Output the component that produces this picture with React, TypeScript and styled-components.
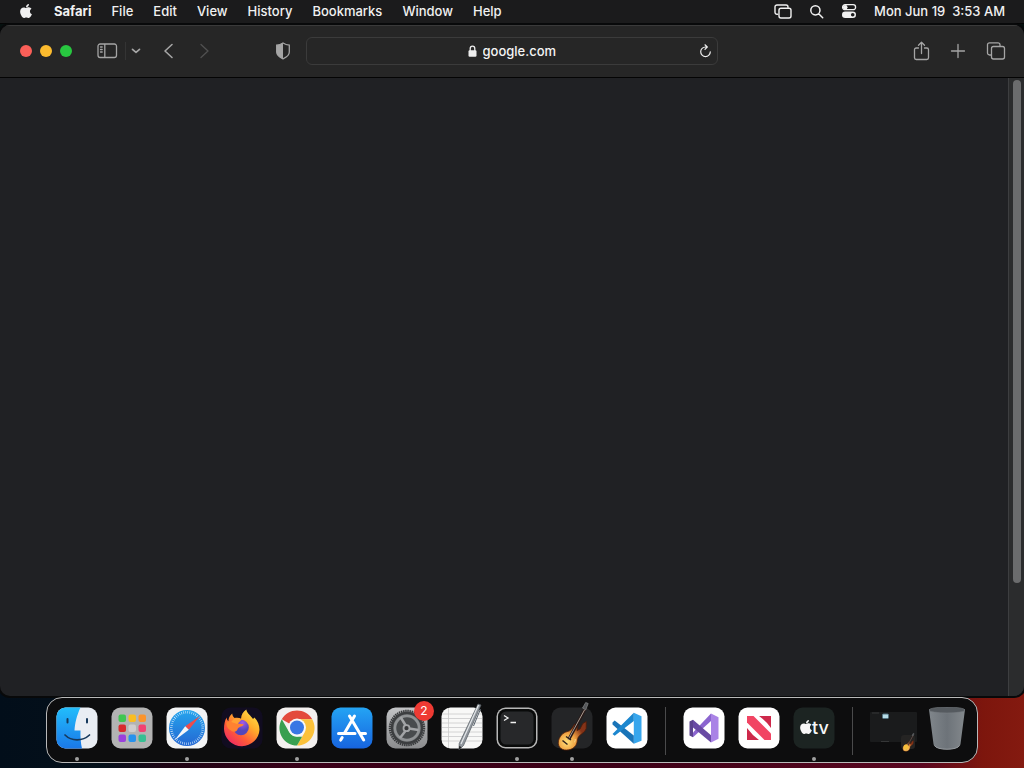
import React from "react";
import styled, { createGlobalStyle } from "styled-components";
import { FaApple } from "react-icons/fa";

const GlobalStyle = createGlobalStyle`
  * { box-sizing: border-box; }
  body {
    margin: 0;
    font-family: Inter, "Liberation Sans", sans-serif;
    background: #03101b;
  }
  button { border: 0; padding: 0; background: none; color: inherit; font: inherit; }
  svg { display: block; }
`;

const Desktop = styled.div`
  display: flex;
  flex-direction: column;
  min-height: 100vh;
  padding-bottom: 5px;
  background:
    linear-gradient(180deg, #06100f 60px, transparent 120px),
    linear-gradient(90deg, #020e1a 0%, #04101a 10%, #1c0414 16%, #3a0018 30%, #3c0016 60%, #5a0720 90%, #7d160d 96%, #841a10 100%);
`;

const MenuBar = styled.header`
  display: flex;
  align-items: center;
  justify-content: space-between;
  height: 24px;
  padding: 0 19px 1px 18px;
  background: #1b1b1c;
  border-bottom: 1px solid #050505;
  color: #f1f1f1;
  font-size: 13px;
  font-weight: 500;
  line-height: 16px;
  white-space: nowrap;
`;

const Menus = styled.nav`
  display: flex;
  align-items: center;
  gap: 20px;
`;

const MenuItem = styled.button<{ $bold?: boolean }>`
  font-weight: ${(p) => (p.$bold ? 700 : 500)};
`;

const Status = styled.div`
  display: flex;
  align-items: center;
  gap: 17px;
`;

const Clock = styled.time`
  white-space: pre;
`;

const Window = styled.main`
  display: flex;
  flex: 1;
  flex-direction: column;
  overflow: hidden;
  margin: 1px 0;
  border-radius: 10px;
  background: #202124;
  box-shadow: 0 0 0 2px #08090a;
`;

const Toolbar = styled.div`
  display: grid;
  grid-template-columns: 1fr minmax(0, 412px) 1fr;
  align-items: center;
  height: 53px;
  padding-bottom: 2px;
  background: #262626;
  border-top: 1px solid #3a3a3a;
  border-bottom: 1px solid #040404;
  color: #a5a5a5;
`;

const ToolbarSide = styled.div<{ $end?: boolean }>`
  display: flex;
  align-items: center;
  justify-content: ${(p) => (p.$end ? "flex-end" : "flex-start")};
  gap: ${(p) => (p.$end ? 20 : 0)}px;
  padding: ${(p) => (p.$end ? "0 18px 0 0" : "0 15px 0 20px")};
`;

const Lights = styled.div`
  display: flex;
  gap: 8px;
  margin-right: 25px;
`;

const Light = styled.button<{ $color: string }>`
  width: 12px;
  height: 12px;
  border-radius: 50%;
  background: ${(p) => p.$color};
`;

const Divider = styled.span`
  width: 1px;
  height: 18px;
  margin: 0 5px 0 7px;
  background: #343434;
`;

const History = styled.div`
  display: flex;
  gap: 25px;
  margin: 0 auto 0 22px;
`;

const ToolButton = styled.button<{ $dim?: boolean }>`
  color: ${(p) => (p.$dim ? "#505050" : "inherit")};
`;

const AddressBar = styled.form`
  display: grid;
  grid-template-columns: 1fr auto 1fr;
  align-items: center;
  height: 28px;
  padding: 0 5px;
  border: 1px solid #3b3b3b;
  border-radius: 6px;
  color: #eeeeee;
`;

const Site = styled.label`
  display: flex;
  grid-column: 2;
  align-items: center;
  gap: 6px;
`;

const Address = styled.input`
  width: 74px;
  padding: 0;
  border: 0;
  outline: 0;
  background: none;
  color: #f4f4f4;
  font: 500 13px/16px Inter, "Liberation Sans", sans-serif;
`;

const Reload = styled.button`
  justify-self: end;
`;

const Page = styled.div`
  display: flex;
  flex: 1;
  justify-content: flex-end;
`;

const ScrollTrack = styled.div`
  display: flex;
  justify-content: flex-end;
  width: 16px;
  padding: 2px 3px;
  border-left: 1px solid #3d3e40;
  background: #2b2c2d;
`;

const ScrollThumb = styled.div`
  width: 8px;
  height: 82%;
  border-radius: 4px;
  background: #6b6c6d;
`;

const DockBar = styled.footer`
  display: flex;
  align-self: center;
  width: calc(100% - 92px);
  max-width: 932px;
  height: 66px;
  padding: 9px 11px 0 9px;
  border: 1px solid #b9b9b9;
  border-radius: 16px;
  background: #0d0d0e;
`;

const DockGroup = styled.div<{ $grow?: boolean; $gap?: number }>`
  display: flex;
  flex: ${(p) => (p.$grow ? "1" : "none")};
  justify-content: space-between;
  gap: ${(p) => p.$gap ?? 0}px;
`;

const DockItem = styled.button`
  position: relative;
  display: flex;
  flex-direction: column;
  align-items: center;
  gap: 8px;
  height: 54px;
`;

const Running = styled.span`
  width: 4px;
  height: 4px;
  border-radius: 50%;
  background: #a0a0a0;
`;

const DockDivider = styled.span`
  width: 1px;
  height: 48px;
  margin: 0 17px;
  background: #4a4a4b;
`;

const Badge = styled.span`
  position: absolute;
  top: -6px;
  right: -6px;
  width: 20px;
  height: 20px;
  border-radius: 50%;
  background: #ee3a33;
  color: #ffffff;
  font-size: 12px;
  line-height: 20px;
  text-align: center;
`;

const Tile = ({ fill, children }: { fill: string; children?: React.ReactNode }) => (
  <svg width="42" height="42" viewBox="0 0 42 42" overflow="visible">
    <rect x=".5" y=".5" width="41" height="41" rx="9" fill={fill} />
    {children}
  </svg>
);

const Finder = () => (
  <Tile fill="#e9edf3">
    <defs>
      <linearGradient id="finder" x2="0" y2="1">
        <stop stopColor="#22bdfb" />
        <stop offset="1" stopColor="#1a78e8" />
      </linearGradient>
    </defs>
    <path d="M9.500 .5H24.500C20.500 9 19 16 18.500 23.500H24.500C24.300 30 24.700 36 26 41.500H9.500a9 9 0 0 1-9-9V9.500a9 9 0 0 1 9-9Z" fill="url(#finder)" />
    <path d="M11.500 12v3.500M31 12v3.500" stroke="#16395c" strokeWidth="2" strokeLinecap="round" />
    <path d="M9 28c6.500 6.500 17.500 6.500 24.500 0" fill="none" stroke="#16395c" strokeWidth="1.700" strokeLinecap="round" />
  </Tile>
);

const launchColors = ["#3fc651", "#f9bd23", "#fb942c", "#d82a2e", "#cfcdce", "#f24272", "#9a40dc", "#2892ed", "#36bf93"];
const Launchpad = () => (
  <Tile fill="#b3b3b3">
    {launchColors.map((c, i) => (
      <rect key={c} x={7.500 + (i % 3) * 10} y={7.500 + Math.floor(i / 3) * 10} width="7.500" height="7.500" rx="2" fill={c} />
    ))}
  </Tile>
);

const Safari = () => (
  <Tile fill="#f3f4f5">
    <defs>
      <linearGradient id="safari" x2="0" y2="1">
        <stop stopColor="#25a5ed" />
        <stop offset="1" stopColor="#2467d3" />
      </linearGradient>
    </defs>
    <circle cx="21" cy="21" r="18" fill="url(#safari)" />
    <circle cx="21" cy="21" r="15.700" fill="none" stroke="#d9edfb" strokeWidth="2.500" strokeDasharray=".6 1.455" />
    <path d="M34 9 22.800 22.800 19.200 19.200Z" fill="#ee4b4b" />
    <path d="M8.500 33.500 19.200 19.200l3.600 3.600Z" fill="#f5f6f8" />
  </Tile>
);

const Firefox = () => (
  <Tile fill="#110c20">
    <defs>
      <linearGradient id="fox" x1="1" x2=".2" y2="1">
        <stop stopColor="#fff052" />
        <stop offset=".4" stopColor="#ffad2b" />
        <stop offset=".7" stopColor="#ff5b37" />
        <stop offset="1" stopColor="#ee2667" />
      </linearGradient>
      <radialGradient id="globe" cx=".6" cy=".2">
        <stop stopColor="#a55be9" />
        <stop offset="1" stopColor="#5346bb" />
      </radialGradient>
    </defs>
    <path d="M5.500 10.500c.3 1.800 1 2.900 1.900 3.800.1-3 1.200-5.800 3.800-7.800.2 2.300 1.200 3.800 2.400 4.600 2.600-.6 4.800-.2 6.400.6.300-4.100 2.200-7.300 5.300-9.200.8 4.300 4.600 6 6.700 9.500l1.500-1.500c3.300 3.500 5 7.700 5 12.200A18 17.500 0 0 1 21 39.200 18 17.500 0 0 1 3 22c0-4.300.8-8.300 2.500-11.500Z" fill="url(#fox)" />
    <circle cx="20" cy="20.500" r="7.800" fill="url(#globe)" />
    <path d="M5.500 15.500c4-2.300 9-2 12.300 1.200l5 .6c-.6 2.100-3.300 2.300-4.900 3.200-2 1.100-.8 4-4.600 4.200-2.400.1-3-1-3.700-1.500C7 22 5 19 5.500 15.500Z" fill="#ff8131" />
    <path d="M12.500 12.200c3-1.300 6.200-1 8.400.4l-4.700 4.500-6-2Z" fill="#ffa033" />
  </Tile>
);

const Chrome = () => (
  <Tile fill="#f3f0ef">
    <path d="M21 21 5.800 12.200A17.600 17.600 0 0 1 36.200 12.200H21Z" fill="#e34a3c" />
    <path d="M21 12.200H36.200A17.600 17.600 0 0 1 21 38.600l7.600-13.200Z" fill="#fbc13a" />
    <path d="M5.800 12.200 13.400 25.400C15 28.200 18 29.800 21 29.800h5.100L21 38.600A17.600 17.600 0 0 1 5.800 12.200Z" fill="#389f50" />
    <circle cx="21" cy="20.500" r="9" fill="#f7f7f7" />
    <circle cx="21" cy="20.500" r="7" fill="#3977e4" />
  </Tile>
);

const AppStore = () => (
  <Tile fill="url(#store)">
    <defs>
      <linearGradient id="store" x2="0" y2="1">
        <stop stopColor="#24a4f4" />
        <stop offset="1" stopColor="#1764df" />
      </linearGradient>
    </defs>
    <g stroke="#fff" strokeWidth="3" strokeLinecap="round">
      <path d="m23.500 9-10.200 17.500M18.500 9l14.200 24M7.500 26.500h16.500M30 26.500h4.500M11.200 30.500l-1.500 2.600" />
    </g>
  </Tile>
);

const Settings = () => (
  <Tile fill="url(#settings)">
    <defs>
      <linearGradient id="settings" x2="0" y2="1">
        <stop stopColor="#c2c3c5" />
        <stop offset="1" stopColor="#8b8c8e" />
      </linearGradient>
    </defs>
    <g fill="none">
      <circle cx="21" cy="21" r="17" stroke="#393b3d" strokeWidth="2.500" strokeDasharray="1.500 .66" />
      <circle cx="21" cy="21" r="15" fill="#777a7c" stroke="#3c3e40" strokeWidth="2.500" />
      <circle cx="21" cy="21" r="12" fill="#484b4d" stroke="#8f9294" strokeWidth="2.500" />
      <path d="M23 21.500l9.500 1.500M20 19l-5.500-9M19.800 23.500l-5.800 7.500" stroke="#a2a4a6" strokeWidth="2.500" />
      <circle cx="20.500" cy="21.200" r="3" fill="#38393b" stroke="#a4a6a8" strokeWidth="1.800" />
    </g>
  </Tile>
);

const TextEdit = () => (
  <Tile fill="#f8f8f7">
    <path d="M1 7h40M1 11.500h40M1 16h40M1 20.500h40M1 25h40M1 29.500h40M1 34h40" stroke="#c9c9ca" strokeWidth=".8" />
    <path d="M7.500 1v40" stroke="#cacaca" strokeWidth=".8" />
    <path d="m37-3 3 1L22.500 38.500 18 43l.2-6.500Z" fill="#90969d" stroke="#555b61" strokeWidth=".7" />
    <path d="M37.500-2 20 37" stroke="#e4e7e9" strokeWidth="1.200" />
    <path d="m18 43 .2-4 2.200.9Z" fill="#222" />
    <path d="m39.500 2-7 17" stroke="#59636e" />
  </Tile>
);

const Terminal = () => (
  <Tile fill="#b7b7b7">
    <rect x="2" y="2" width="38" height="38" rx="7.500" fill="#090a0a" />
    <rect x="4.500" y="4.500" width="33" height="33" rx="5.500" fill="#27282a" />
    <path d="m8 8.500 4 2.500-4 2.500M14.500 15.500H20" fill="none" stroke="#f2f2f2" strokeWidth="1.300" />
  </Tile>
);

const Guitar = () => (
  <g>
    <path d="M20.500 22c-1.800 3-5.500 2-8.500 4.500C7.500 30.500 6 36 8.500 40c2.500 4 11 4.300 15.200-.2 3.600-3.800 1.800-7.800 4.300-10.600 2-2.200 6-3.800 7.200-7.700l.1-7-3.500 2-2.800 5.500-3 1.500 1.200-5.500-3.500-1Z" fill="url(#sunburst)" stroke="#4d1c09" strokeWidth=".8" />
    <path d="M18 32 34.500 1.500" stroke="#291a18" strokeWidth="3" />
    <path d="M17 33 33.500 3" stroke="#a89b90" strokeWidth="1" />
    <path d="m31.500 1 3.200-5.500 2.500 1-2.500 6.500Z" fill="#55575a" stroke="#919394" strokeWidth=".6" />
    <path d="m11.500 33.500 5 4M15 29.500l5 3.500" stroke="#31221b" strokeWidth="1.500" />
    <path d="M23 35.500c1-.6 1.300-2 1.200-3.500" fill="none" stroke="#f4d88b" />
  </g>
);

const GarageBand = () => (
  <Tile fill="#242527">
    <defs>
      <radialGradient id="sunburst" cx=".3" cy=".72" r=".65">
        <stop stopColor="#ffe07a" />
        <stop offset=".5" stopColor="#f0a040" />
        <stop offset="1" stopColor="#843318" />
      </radialGradient>
    </defs>
    <Guitar />
  </Tile>
);

const VsCode = () => (
  <Tile fill="#ffffff">
    <path d="m27.800 5.700 7.700 3.500v24.500l-7.700 3.100Z" fill="#37a6ed" />
    <path d="m6.500 15.500 2.200-1.900 19.100 14.800v8.400L6.500 17.500Z" fill="#1974b8" />
    <path d="m6.500 27 21.300-21.300V14L8.700 28.800l-2.200-1.900Z" fill="#1c87cf" />
  </Tile>
);

const VisualStudio = () => (
  <Tile fill="#ffffff">
    <path d="m6.500 14.500 3.500-1.700v17.500l-3.500-1.800Z" fill="#5c438f" />
    <path d="M10 25.500 28 6.500V14L10 30.300Z" fill="#8b65cf" />
    <path d="M10 12.800 28 28.200v7.300l-18-15Z" fill="#694aa4" />
    <path d="m28 6.500 7.500 3.800v21.500L28 35.500Z" fill="#aa83e6" />
  </Tile>
);

const News = () => (
  <Tile fill="#ffffff">
    <path d="M9 9h6.500L33 26.500V33h-6.500L9 15.500Z" fill="#f14463" />
    <path d="M21 9H33v12Q28 14 21 9ZM9 21V33h12Q14 28 9 21Z" fill="#ce294b" />
  </Tile>
);

const TvText = styled.text`
  font: 500 18px Inter, "Liberation Sans", sans-serif;
`;

const AppleTv = () => (
  <Tile fill="#1c2422">
    <FaApple x="5" y="12" width="14" height="16" color="#f7f7f7" />
    <TvText x="19" y="27" fill="#f7f7f7">tv</TvText>
  </Tile>
);

const Minimized = () => (
  <svg width="47" height="42" viewBox="0 0 47 42" overflow="visible">
    <rect y="5" width="47" height="30" rx="1" fill="#1a1b1c" />
    <path d="M2 6h7M11 34.500h8" stroke="#353637" />
    <rect x="12.500" y="7" width="6" height="4.500" rx="1" fill="#b7dce7" stroke="#527281" />
    <rect x="31" y="28" width="14" height="14" rx="3" fill="#252423" />
    <g transform="translate(30 28) scale(.38)"><Guitar /></g>
    <circle cx="36" cy="40" r="2.500" fill="#f6bf3c" />
  </svg>
);

const Trash = () => (
  <svg width="38" height="46" viewBox="0 0 38 46">
    <defs>
      <linearGradient id="trash">
        <stop stopColor="#80868b" />
        <stop offset=".5" stopColor="#6d7379" />
        <stop offset="1" stopColor="#83888c" />
      </linearGradient>
    </defs>
    <path d="M1 2.500 5.500 37c.6 7 26.400 7 27 0L37 2.500Z" fill="url(#trash)" />
    <ellipse cx="19" cy="3" rx="18" ry="3" fill="#555a5f" stroke="#777c81" strokeWidth=".6" />
    <path d="M6.500 38.500c2 5 23 5 25 0" fill="none" stroke="#989da1" />
  </svg>
);

const apps = [
  { name: "Finder", Icon: Finder, running: true },
  { name: "Launchpad", Icon: Launchpad },
  { name: "Safari", Icon: Safari, running: true },
  { name: "Firefox", Icon: Firefox },
  { name: "Chrome", Icon: Chrome, running: true },
  { name: "App Store", Icon: AppStore },
  { name: "System Settings", Icon: Settings, badge: 2 },
  { name: "TextEdit", Icon: TextEdit },
  { name: "Terminal", Icon: Terminal, running: true },
  { name: "GarageBand", Icon: GarageBand, running: true },
  { name: "Visual Studio Code", Icon: VsCode },
];

const recentApps = [
  { name: "Visual Studio", Icon: VisualStudio },
  { name: "News", Icon: News },
  { name: "Apple TV", Icon: AppleTv, running: true },
];

type DockApp = { name: string; Icon: React.ComponentType; running?: boolean; badge?: number };

const AppButton = ({ name, Icon, running, badge }: DockApp) => (
  <DockItem aria-label={name}>
    <Icon />
    {running && <Running />}
    {badge && <Badge>{badge}</Badge>}
  </DockItem>
);

const Line = ({ w, h, d, stroke = 1.3 }: { w: number; h: number; d: string; stroke?: number }) => (
  <svg width={w} height={h} viewBox={`0 0 ${w} ${h}`} fill="none" stroke="currentColor" strokeWidth={stroke} strokeLinecap="round" strokeLinejoin="round">
    <path d={d} />
  </svg>
);

export default function App() {
  return (
    <Desktop>
      <GlobalStyle />
      <MenuBar>
        <Menus>
          <MenuItem aria-label="Apple menu"><FaApple size={16} /></MenuItem>
          <MenuItem $bold>Safari</MenuItem>
          {["File", "Edit", "View", "History", "Bookmarks", "Window", "Help"].map((m) => (
            <MenuItem key={m}>{m}</MenuItem>
          ))}
        </Menus>
        <Status>
          <MenuItem aria-label="Stage Manager">
            <Line w={18} h={15} stroke={1.4} d="M3.500 10.300H3A2 2 0 0 1 1 8.300V3A2 2 0 0 1 3 1H12A2 2 0 0 1 14 3M7 4.300H15A2 2 0 0 1 17 6.300V12A2 2 0 0 1 15 14H7A2 2 0 0 1 5 12V6.300A2 2 0 0 1 7 4.300Z" />
          </MenuItem>
          <MenuItem aria-label="Search">
            <Line w={15} h={15} stroke={1.500} d="M11 6.300A4.600 4.600 0 1 1 1.800 6.300A4.600 4.600 0 0 1 11 6.300ZM9.700 9.700l4 4" />
          </MenuItem>
          <MenuItem aria-label="Control Center">
            <svg width="16" height="14" viewBox="0 0 16 14">
              <rect x="1.600" y=".7" width="13" height="5" rx="2.500" fill="none" stroke="currentColor" strokeWidth="1.300" />
              <circle cx="4.200" cy="3.200" r="2.300" fill="currentColor" />
              <rect x="1" y="7.500" width="14" height="6.500" rx="3.200" fill="currentColor" />
              <circle cx="11.700" cy="10.700" r="1.800" fill="#1b1b1c" />
            </svg>
          </MenuItem>
          <Clock>{"Mon Jun 19  3:53 AM"}</Clock>
        </Status>
      </MenuBar>

      <Window>
        <Toolbar>
          <ToolbarSide>
            <Lights>
              <Light $color="#fb5f58" aria-label="Close" />
              <Light $color="#fcbb2e" aria-label="Minimize" />
              <Light $color="#28c740" aria-label="Zoom" />
            </Lights>
            <ToolButton aria-label="Show sidebar">
              <Line w={21} h={16} d="M3.200 1H17.300A2.200 2.200 0 0 1 19.500 3.200V12.300A2.200 2.200 0 0 1 17.300 14.500H3.200A2.200 2.200 0 0 1 1 12.300V3.200A2.200 2.200 0 0 1 3.200 1ZM7.800 1V14.500M3.500 4H5.200M3.500 6.500H5.200M3.500 9H5.200" />
            </ToolButton>
            <Divider />
            <ToolButton aria-label="Tab groups"><Line w={10} h={6} stroke={1.700} d="M1.500 1.300 5 4.300 8.500 1.300" /></ToolButton>
            <History>
              <ToolButton aria-label="Back"><Line w={11} h={16} stroke={1.600} d="M9 1.500 2 8l7 6.500" /></ToolButton>
              <ToolButton aria-label="Forward" $dim><Line w={11} h={16} d="m2 1.500 7 6.500-7 6.500" /></ToolButton>
            </History>
            <ToolButton aria-label="Privacy report">
              <svg width="16" height="18" viewBox="0 0 16 18">
                <path d="M8 1C6 2.300 4 3 1.700 3.200V10c0 3 2.800 5.300 6.300 6.800 3.500-1.500 6.300-3.800 6.300-6.800V3.200C12 3 10 2.300 8 1Z" fill="none" stroke="currentColor" strokeWidth="1.300" />
                <path d="M8 1C6 2.300 4 3 1.700 3.200V10c0 3 2.800 5.300 6.300 6.800Z" fill="currentColor" />
              </svg>
            </ToolButton>
          </ToolbarSide>
          <AddressBar>
            <Site>
              <svg width="9" height="12" viewBox="0 0 9 12">
                <path d="M2.200 6V3.500a2.300 2.300 0 0 1 4.600 0V6" fill="none" stroke="currentColor" strokeWidth="1.300" />
                <rect x=".5" y="5.200" width="8" height="6.500" rx="1.200" fill="currentColor" />
              </svg>
              <Address aria-label="Address" defaultValue="google.com" />
            </Site>
            <Reload type="button" aria-label="Reload">
              <Line w={13} h={14} stroke={1.200} d="M6.500 3A4.800 4.800 0 1 0 11.300 7.800M6.300 3H7.500M6 .8 8.300 3 6 5.300" />
            </Reload>
          </AddressBar>
          <ToolbarSide $end>
            <ToolButton aria-label="Share">
              <Line w={17} h={20} d="M5.500 7H3.200A1.700 1.700 0 0 0 1.500 8.700V16.800A1.700 1.700 0 0 0 3.200 18.500H13.800A1.700 1.700 0 0 0 15.500 16.800V8.700A1.700 1.700 0 0 0 13.800 7H11.500M8.500 12.500V1.500M5.500 4.300 8.500 1.300 11.500 4.300" />
            </ToolButton>
            <ToolButton aria-label="New tab"><Line w={16} h={16} d="M8 1.500V14.500M1.500 8H14.500" /></ToolButton>
            <ToolButton aria-label="Tab overview">
              <Line w={20} h={18} d="M4.500 13H3.500A2 2 0 0 1 1.500 11V2.800A2 2 0 0 1 3.500 .8H12A2 2 0 0 1 14 2.800V4M7.500 4.500H16.500A2 2 0 0 1 18.500 6.500V15A2 2 0 0 1 16.500 17H7.500A2 2 0 0 1 5.500 15V6.500A2 2 0 0 1 7.500 4.500Z" />
            </ToolButton>
          </ToolbarSide>
        </Toolbar>
        <Page>
          <ScrollTrack><ScrollThumb /></ScrollTrack>
        </Page>
      </Window>

      <DockBar>
        <DockGroup $grow>
          {apps.map((a) => <AppButton key={a.name} {...a} />)}
        </DockGroup>
        <DockDivider />
        <DockGroup $gap={13}>
          {recentApps.map((a) => <AppButton key={a.name} {...a} />)}
        </DockGroup>
        <DockDivider />
        <DockGroup $gap={11}>
          <DockItem aria-label="Minimized window"><Minimized /></DockItem>
          <DockItem aria-label="Trash"><Trash /></DockItem>
        </DockGroup>
      </DockBar>
    </Desktop>
  );
}
